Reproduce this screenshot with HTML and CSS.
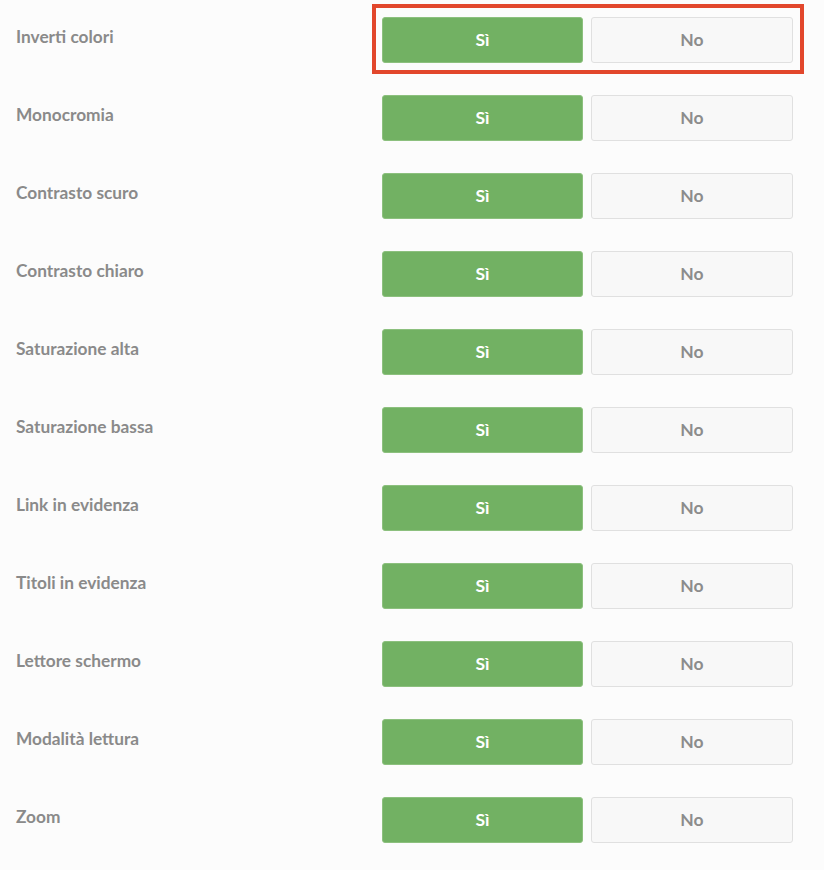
FILE: index.html
```html
<!DOCTYPE html>
<html lang="it">
<head>
  <meta charset="UTF-8" />
  <title>Accessibilità</title>
  <link rel="stylesheet" href="styles.css">
</head>
<body>
  <div class="options">
    <div class="option">
      <span class="label">Inverti colori</span>
      <div class="highlight">
        <div class="choices">
          <button class="btn yes">Sì</button>
          <button class="btn no">No</button>
        </div>
      </div>
    </div>
    <div class="option">
      <span class="label">Monocromia</span>
      <div class="choices">
        <button class="btn yes">Sì</button>
        <button class="btn no">No</button>
      </div>
    </div>
    <div class="option">
      <span class="label">Contrasto scuro</span>
      <div class="choices">
        <button class="btn yes">Sì</button>
        <button class="btn no">No</button>
      </div>
    </div>
    <div class="option">
      <span class="label">Contrasto chiaro</span>
      <div class="choices">
        <button class="btn yes">Sì</button>
        <button class="btn no">No</button>
      </div>
    </div>
    <div class="option">
      <span class="label">Saturazione alta</span>
      <div class="choices">
        <button class="btn yes">Sì</button>
        <button class="btn no">No</button>
      </div>
    </div>
    <div class="option">
      <span class="label">Saturazione bassa</span>
      <div class="choices">
        <button class="btn yes">Sì</button>
        <button class="btn no">No</button>
      </div>
    </div>
    <div class="option">
      <span class="label">Link in evidenza</span>
      <div class="choices">
        <button class="btn yes">Sì</button>
        <button class="btn no">No</button>
      </div>
    </div>
    <div class="option">
      <span class="label">Titoli in evidenza</span>
      <div class="choices">
        <button class="btn yes">Sì</button>
        <button class="btn no">No</button>
      </div>
    </div>
    <div class="option">
      <span class="label">Lettore schermo</span>
      <div class="choices">
        <button class="btn yes">Sì</button>
        <button class="btn no">No</button>
      </div>
    </div>
    <div class="option">
      <span class="label">Modalità lettura</span>
      <div class="choices">
        <button class="btn yes">Sì</button>
        <button class="btn no">No</button>
      </div>
    </div>
    <div class="option">
      <span class="label">Zoom</span>
      <div class="choices">
        <button class="btn yes">Sì</button>
        <button class="btn no">No</button>
      </div>
    </div>
  </div>
</body>
</html>
```

FILE: styles.css
```css
body {
  background-color: #fcfcfc;
  font-family: Lato, 'Open Sans', sans-serif;
  margin: 0;
  padding: 0;
}

.options {
  padding: 17px 31px 0 16px;
}

.option {
  display: flex;
  align-items: flex-start;
  height: 46px;
  margin-bottom: 32px;
}

.label {
  width: 366px;
  flex-shrink: 0;
  padding-top: 9px;
  font-size: 17.3px;
  font-weight: bold;
  color: #8a8a8a;
}

.choices {
  display: flex;
  gap: 8px;
}

.highlight {
  border: 4px solid #e2472c;
  padding: 9px 7px 7px 6px;
  margin: -13px -11px -11px -10px;
}

.btn {
  width: 201px;
  height: 46px;
  padding: 0 0 2px;
  border: 1px solid #e0e0e0;
  border-radius: 3px;
  font-family: Lato, 'Open Sans', sans-serif;
  font-size: 17.5px;
  font-weight: bold;
  cursor: pointer;
}

.yes {
  background-color: #72b163;
  border-color: #8cc07e;
  color: #ffffff;
}

.no {
  width: 202px;
  background-color: #f8f8f8;
  color: #8c8c8c;
}
```
